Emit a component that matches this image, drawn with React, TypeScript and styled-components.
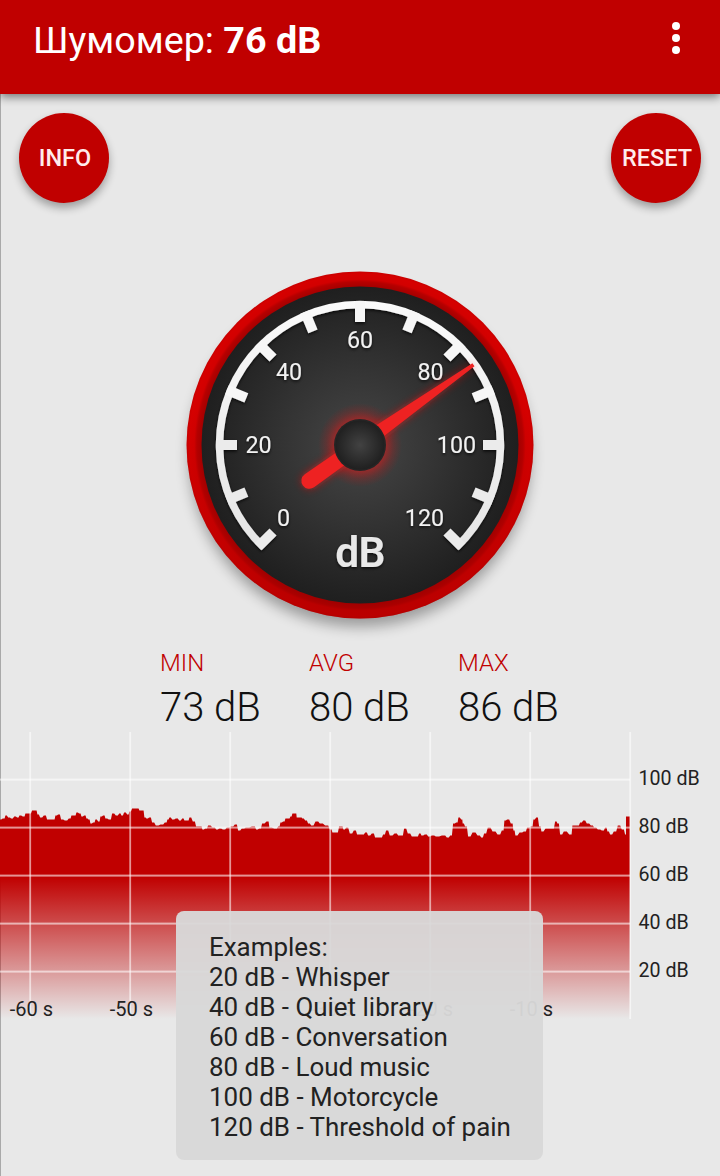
import React from "react";
import styled, { createGlobalStyle } from "styled-components";

const RED = "#c00000";
const BG = "#e8e8e8";

const GlobalStyle = createGlobalStyle`
  * { box-sizing: border-box; }
  body { margin: 0; background: ${BG}; font-family: Roboto, "Noto Sans", sans-serif; }
`;

const Screen = styled.main`
  position: relative;
  width: 720px;
  height: 1176px;
  overflow: hidden;
  display: flex;
  flex-direction: column;
  background: ${BG};
  box-shadow: inset 1px 0 0 #a9a9a9;
`;

const AppBar = styled.header`
  flex: none;
  height: 94px;
  padding: 0 40px 14px 33px;
  display: flex;
  align-items: center;
  justify-content: space-between;
  background: ${RED};
  box-shadow: 0 3px 9px rgba(0, 0, 0, 0.5);
`;

const Title = styled.h1`
  margin: -1px 0 0;
  font-size: 37.7px;
  line-height: 44px;
  font-weight: 370;
  color: #fff;
  white-space: pre;
`;

const Reading = styled.strong`
  font-weight: 700;
`;

const MenuButton = styled.button`
  display: flex;
  flex-direction: column;
  gap: 4px;
  padding: 0;
  margin-top: -4px;
  border: 0;
  background: none;
`;

const Dot = styled.span`
  width: 8px;
  height: 8px;
  border-radius: 50%;
  background: #fff;
`;

const Actions = styled.div`
  flex: none;
  display: flex;
  justify-content: space-between;
  padding: 19px 19px 0;
`;

const RoundButton = styled.button`
  width: 90px;
  height: 90px;
  padding: 0 0 0 2px;
  border: 0;
  border-radius: 50%;
  background: ${RED};
  color: #ffecec;
  font: 500 23.5px/28px Roboto, sans-serif;
  box-shadow: 0 5px 8px rgba(0, 0, 0, 0.32);
`;

const GaugeArea = styled.section`
  flex: none;
  display: flex;
  justify-content: center;
  height: 440px;
  padding-top: 42px;
`;

const GaugeSvg = styled.svg`
  flex: none;
  width: 400px;
  height: 400px;
  font-family: Roboto, sans-serif;
`;

const Stats = styled.section`
  flex: none;
  display: grid;
  grid-template-columns: repeat(3, 149px);
  height: 89px;
  padding: 6px 0 0 160px;
`;

const StatLabel = styled.div`
  font-size: 24px;
  line-height: 28px;
  font-weight: 300;
  color: ${RED};
`;

const StatValue = styled.div`
  margin-top: 7px;
  font-size: 40px;
  line-height: 47px;
  font-weight: 300;
  color: #111;
  white-space: nowrap;
`;

const ChartRow = styled.section`
  flex: none;
  display: flex;
  gap: 6.5px;
`;

const ChartSvg = styled.svg`
  flex: none;
  display: block;
  width: 632px;
  height: 288px;
  font-family: Roboto, sans-serif;
`;

const LevelAxis = styled.div`
  padding-top: 23px;
  font-size: 19.6px;
  line-height: 48px;
  color: #222;
  white-space: nowrap;
`;

const Toast = styled.aside`
  position: absolute;
  left: 176px;
  top: 911px;
  width: 367px;
  height: 249px;
  padding: 21px 33px;
  border-radius: 8px;
  background: rgba(216, 216, 216, 0.96);
  color: #222;
  font-size: 25.95px;
  line-height: 30px;
  white-space: nowrap;
`;

const polar = (deg: number, r: number): [number, number] => {
  const a = (deg * Math.PI) / 180;
  return [200 + r * Math.sin(a), 200 - r * Math.cos(a)];
};

const ticks = Array.from({ length: 13 }, (_, i) => -135 + i * 22.5);

const dialLabels: [string, number, number][] = [
  ["0", 123.5, 281],
  ["20", 98.5, 208],
  ["40", 129, 135],
  ["60", 200, 103],
  ["80", 270.5, 135],
  ["100", 296.5, 208],
  ["120", 264.5, 281],
];

function Gauge() {
  const [x1, y1] = polar(-136.5, 140.5);
  const [x2, y2] = polar(136.5, 140.5);
  return (
    <GaugeSvg viewBox="0 0 400 400">
      <defs>
        <radialGradient id="face">
          <stop offset="0" stopColor="#464646" />
          <stop offset="0.5" stopColor="#333" />
          <stop offset="1" stopColor="#1f1f1f" />
        </radialGradient>
        <radialGradient id="rim" gradientUnits="userSpaceOnUse" cx="200" cy="200" r="173.5">
          <stop offset="0.915" stopColor="#a60000" />
          <stop offset="0.94" stopColor="#b60000" />
          <stop offset="0.955" stopColor="#d20000" />
          <stop offset="0.985" stopColor="#d60000" />
          <stop offset="1" stopColor="#c80000" />
        </radialGradient>
        <linearGradient id="rimShade" x1="0" y1="0" x2="0" y2="1">
          <stop offset="0.4" stopColor="#900" stopOpacity="0" />
          <stop offset="1" stopColor="#900" stopOpacity="0.45" />
        </linearGradient>
        <linearGradient id="scale" gradientUnits="userSpaceOnUse" x1="0" y1="55" x2="0" y2="310">
          <stop offset="0" stopColor="#fafafa" />
          <stop offset="1" stopColor="#e5e5e5" />
        </linearGradient>
        <radialGradient id="hub">
          <stop offset="0" stopColor="#424242" />
          <stop offset="1" stopColor="#202020" />
        </radialGradient>
        <radialGradient id="glow">
          <stop offset="0.62" stopColor="#c02020" stopOpacity="0.65" />
          <stop offset="0.8" stopColor="#b01c1c" stopOpacity="0.28" />
          <stop offset="1" stopColor="#a01818" stopOpacity="0" />
        </radialGradient>
        <filter id="cast" x="-20%" y="-20%" width="140%" height="140%">
          <feGaussianBlur stdDeviation="7" />
        </filter>
        <filter id="soft" x="-20%" y="-20%" width="140%" height="140%">
          <feDropShadow dx="0" dy="1.5" stdDeviation="1.8" floodColor="#000" floodOpacity="0.75" />
        </filter>
        <filter id="needleGlow" filterUnits="userSpaceOnUse" x="0" y="100" width="400" height="200">
          <feGaussianBlur stdDeviation="4" />
        </filter>
      </defs>

      <circle cx="200" cy="211" r="171" fill="#000" opacity="0.33" filter="url(#cast)" />
      <circle cx="200" cy="200" r="173.5" fill="url(#rim)" />
      <circle cx="200" cy="200" r="173.5" fill="url(#rimShade)" />
      <circle cx="200" cy="200" r="158.5" fill="url(#face)" />

      <g filter="url(#soft)">
        <path
          d={`M${x1} ${y1}A140.5 140.5 0 1 1 ${x2} ${y2}`}
          fill="none"
          stroke="url(#scale)"
          strokeWidth="7.5"
        />
        {ticks.map((deg) => (
          <rect
            key={deg}
            x="195"
            y="56"
            width="10"
            height="21"
            fill={Math.abs(deg) > 80 ? "#ebebeb" : "#f7f7f7"}
            transform={`rotate(${deg} 200 200)`}
          />
        ))}
      </g>

      <g fill="#f2f2f2" fontSize="23.3" textAnchor="middle" filter="url(#soft)">
        {dialLabels.map(([text, x, y]) => (
          <text key={text} x={x} y={y}>{text}</text>
        ))}
        <text
          x="200"
          y="322"
          fontSize="42.5"
          fontWeight="600"
          fill="#e8e8e8"
          letterSpacing="-0.6"
        >
          dB
        </text>
      </g>

      <circle cx="200" cy="200" r="42" fill="url(#glow)" />
      <g transform="rotate(-35.3 200 200)">
        <path
          d="M338 199L200 192.5H138A7.5 7.5 0 0 0 138 207.5H200L338 201Z"
          fill="#e01818"
          opacity="0.75"
          filter="url(#needleGlow)"
        />
        <path
          d="M339 198.2L215 193L138 192A8 8 0 0 0 138 208L215 207L339 201.8Z"
          fill="#ee2222"
        />
      </g>
      <circle cx="200" cy="200" r="26" fill="#252525" />
      <circle cx="200" cy="200" r="24.5" fill="url(#hub)" />
    </GaugeSvg>
  );
}

/* Recorded levels as [x, y] vertices of the area's upper edge. */
const levels: [number, number][] = [
  [0, 88], [4, 87], [6, 84], [9, 86], [12, 87], [15, 85], [18, 86], [20, 84], [24, 85], [26, 82],
  [30, 82], [33, 79], [36, 79], [38, 83], [41, 86], [45, 84], [48, 88], [54, 88], [56, 84], [59, 83],
  [62, 88], [66, 89], [70, 87], [72, 84], [75, 84], [77, 81], [80, 82], [82, 85], [85, 84], [87, 87],
  [89, 88], [91, 92], [94, 91], [96, 88], [99, 90], [101, 85], [104, 84], [106, 87], [110, 88], [113, 82],
  [117, 84], [120, 82], [122, 84], [125, 81], [128, 83], [130, 80], [133, 77], [138, 77], [140, 79], [143, 79],
  [145, 86], [147, 87], [150, 86], [153, 91], [157, 94], [162, 93], [166, 91], [168, 88], [170, 86], [173, 88],
  [177, 87], [180, 89], [183, 87], [185, 89], [188, 89], [190, 86], [194, 90], [197, 95], [201, 95], [203, 98],
  [206, 97], [209, 94], [214, 96], [217, 98], [220, 97], [224, 98], [228, 96], [232, 95], [236, 93], [239, 99],
  [243, 97], [247, 96], [254, 95], [257, 98], [260, 97], [263, 92], [268, 90], [270, 96], [276, 97], [279, 95],
  [281, 91], [284, 90], [286, 87], [289, 87], [291, 85], [293, 82], [296, 82], [297, 86], [301, 86], [303, 87],
  [306, 89], [309, 92], [312, 94], [317, 90], [321, 92], [327, 94], [331, 98], [333, 101], [337, 101], [340, 95],
  [342, 95], [344, 98], [347, 96], [351, 102], [355, 99], [358, 103], [363, 103], [366, 101], [369, 104], [373, 102],
  [376, 106], [381, 106], [384, 103], [387, 99], [391, 104], [396, 102], [399, 104], [402, 104], [405, 97], [409, 102],
  [413, 105], [417, 105], [420, 102], [422, 104], [426, 103], [429, 105], [433, 104], [437, 105], [444, 104], [448, 106],
  [451, 104], [454, 92], [457, 91], [459, 86], [462, 88], [463, 92], [466, 95], [469, 105], [474, 101], [479, 104],
  [482, 106], [485, 102], [489, 96], [494, 100], [499, 103], [503, 99], [505, 89], [508, 88], [512, 92], [514, 99],
  [516, 104], [521, 101], [525, 100], [528, 96], [532, 95], [534, 88], [537, 86], [540, 95], [542, 100], [547, 97],
  [553, 97], [556, 90], [558, 92], [561, 103], [565, 100], [571, 103], [573, 94], [578, 94], [581, 91], [584, 89],
  [588, 92], [592, 94], [595, 96], [599, 98], [603, 99], [606, 96], [608, 100], [611, 103], [615, 100], [619, 94],
  [623, 98], [626, 103], [626, 85], [630, 85],
];

/* Each sample holds its level around its own x, with a short ramp to the next one. */
const edge = levels
  .map(([x, y], i) => {
    const before = i > 0 ? (x - levels[i - 1][0]) * 0.3 : 0;
    const after = i < levels.length - 1 ? (levels[i + 1][0] - x) * 0.3 : 0;
    return `L${(x - before).toFixed(1)} ${y - 0.5}H${(x + after).toFixed(1)}`;
  })
  .join("");

const area = `M0 287${edge}L630 287Z`;

function LevelChart() {
  return (
    <ChartSvg viewBox="0 0 632 288">
      <defs>
        <linearGradient id="fade" gradientUnits="userSpaceOnUse" x1="0" y1="145" x2="0" y2="287">
          <stop offset="0" stopColor={RED} />
          <stop offset="1" stopColor={RED} stopOpacity="0" />
        </linearGradient>
      </defs>
      <path d={area} fill="url(#fade)" />
      <g fill="#fff" fillOpacity="0.58">
        {[0, 1, 2, 3, 4].map((i) => (
          <rect key={i} x="0" y={46.6 + i * 48} width="630" height="2" />
        ))}
        {[0, 1, 2, 3, 4, 5, 6].map((i) => (
          <rect key={i} x={29.3 + i * 100} y="0" width="1.8" height="287" />
        ))}
      </g>
      <g fontSize="20" fill="#222" textAnchor="middle">
        {[60, 50, 40, 30, 20, 10].map((s, i) => (
          <text key={s} x={31.5 + i * 100} y="283.5">{`-${s} s`}</text>
        ))}
      </g>
    </ChartSvg>
  );
}

const stats = [
  ["MIN", "73 dB"],
  ["AVG", "80 dB"],
  ["MAX", "86 dB"],
];

const examples = [
  "Examples:",
  "20 dB - Whisper",
  "40 dB - Quiet library",
  "60 dB - Conversation",
  "80 dB - Loud music",
  "100 dB - Motorcycle",
  "120 dB - Threshold of pain",
];

export default function App() {
  return (
    <>
      <GlobalStyle />
      <Screen>
        <AppBar>
          <Title>
            Шумомер: <Reading>76 dB</Reading>
          </Title>
          <MenuButton aria-label="Menu">
            <Dot />
            <Dot />
            <Dot />
          </MenuButton>
        </AppBar>
        <Actions>
          <RoundButton>INFO</RoundButton>
          <RoundButton>RESET</RoundButton>
        </Actions>
        <GaugeArea>
          <Gauge />
        </GaugeArea>
        <Stats>
          {stats.map(([label, value]) => (
            <div key={label}>
              <StatLabel>{label}</StatLabel>
              <StatValue>{value}</StatValue>
            </div>
          ))}
        </Stats>
        <ChartRow>
          <LevelChart />
          <LevelAxis>
            {[100, 80, 60, 40, 20].map((level) => (
              <div key={level}>{level} dB</div>
            ))}
          </LevelAxis>
        </ChartRow>
        <Toast>
          {examples.map((line) => (
            <div key={line}>{line}</div>
          ))}
        </Toast>
      </Screen>
    </>
  );
}
